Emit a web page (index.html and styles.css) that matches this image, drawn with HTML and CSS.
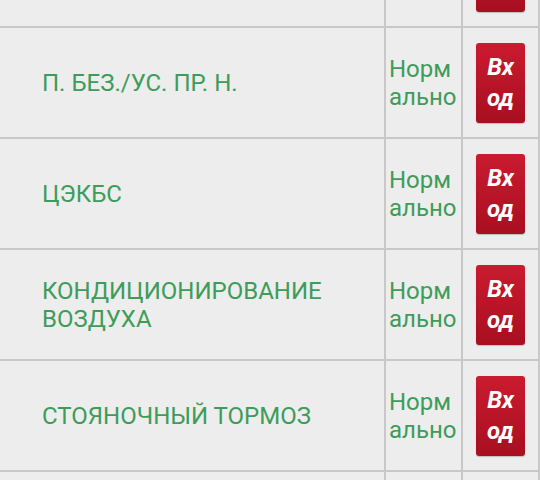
FILE: index.html
```html
<!DOCTYPE html>
<html lang="ru">
<head>
<meta charset="utf-8">
<link rel="stylesheet" href="styles.css">
</head>
<body>
<div class="grid">
  <div class="cell name"></div>
  <div class="cell status"></div>
  <div class="cell action"><span class="btn">Вход</span></div>

  <div class="cell name">П. БЕЗ./УС. ПР. Н.</div>
  <div class="cell status">Нормально</div>
  <div class="cell action"><span class="btn">Вход</span></div>

  <div class="cell name">ЦЭКБС</div>
  <div class="cell status">Нормально</div>
  <div class="cell action"><span class="btn">Вход</span></div>

  <div class="cell name">КОНДИЦИОНИРОВАНИЕ ВОЗДУХА</div>
  <div class="cell status">Нормально</div>
  <div class="cell action"><span class="btn">Вход</span></div>

  <div class="cell name">СТОЯНОЧНЫЙ ТОРМОЗ</div>
  <div class="cell status">Нормально</div>
  <div class="cell action"><span class="btn">Вход</span></div>

  <div class="cell name"></div>
  <div class="cell status"></div>
  <div class="cell action"></div>
</div>
</body>
</html>
```
FILE: styles.css
```css
html, body {
  margin: 0;
  padding: 0;
  background: #ededed;
  overflow: hidden;
}
body {
  width: 540px;
  height: 480px;
  font-family: Roboto, "Noto Sans", sans-serif;
}
.grid {
  display: grid;
  grid-template-columns: 384px 75px 75px;
  grid-template-rows: repeat(5, 109px) 8px;
  gap: 2px;
  padding-right: 2px;
  margin-top: -83px;
  background: #c8c8c8;
  width: 538px;
}
.cell {
  background: #ededed;
  display: flex;
  align-items: center;
  color: #3d9c5a;
  font-size: 24px;
  line-height: 28px;
}
.name {
  padding-left: 42px;
  padding-right: 10px;
}
.status {
  padding: 0 3px;
  word-break: break-all;
}
.action {
  justify-content: center;
}
.btn {
  box-sizing: border-box;
  width: 49px;
  height: 80px;
  padding: 9px 7px 0;
  border-radius: 3px;
  background: linear-gradient(#ca1b2f, #a80f20);
  box-shadow: 0 1px 1px rgba(0,0,0,0.2);
  color: #fff;
  font-weight: bold;
  font-style: italic;
  font-size: 24px;
  line-height: 31px;
  text-align: center;
  word-break: break-all;
}
```
